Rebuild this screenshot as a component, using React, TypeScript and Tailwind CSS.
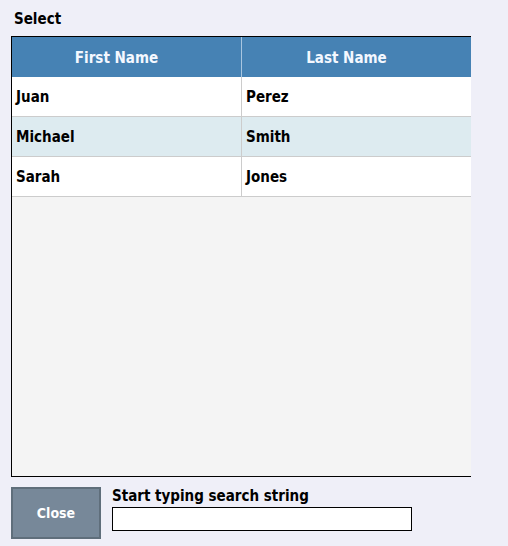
export default function App() {
  const rows = [
    ["Juan", "Perez"],
    ["Michael", "Smith"],
    ["Sarah", "Jones"],
  ];
  return (
    <div
      className="w-[508px] h-[546px] bg-[#efeff8] text-black overflow-hidden"
      style={{ fontFamily: '"DejaVu Sans Condensed", "DejaVu Sans", Verdana, sans-serif' }}
    >
      <div className="pl-[14px] pt-[10px] h-[36px] text-[15px] font-bold leading-[18px]">Select</div>
      <div className="ml-[11px] w-[460px] h-[441px] border-l border-t border-b border-black bg-[#f4f4f4] overflow-hidden">
        <div className="flex h-[40px] bg-[#4682b4] text-[#f4f8ff] text-[15px] font-bold">
          <div className="w-[230px] flex items-center justify-center pr-[20px] pt-[2px] border-r border-[#a9c6e0]">First Name</div>
          <div className="flex-1 flex items-center justify-center pr-[20px] pt-[2px]">Last Name</div>
        </div>
        {rows.map((r, i) => (
          <div
            key={i}
            className={`flex h-[40px] border-b border-[#cccccc] text-[15px] font-bold ${i === 1 ? "bg-[#ddebf0]" : "bg-white"}`}
          >
            <div className="w-[230px] flex items-center pl-[4px] pt-[2px] border-r border-[#cccccc]">{r[0]}</div>
            <div className="flex-1 flex items-center pl-[4px] pt-[2px]">{r[1]}</div>
          </div>
        ))}
      </div>
      <div className="flex mt-[10px] ml-[11px]">
        <button className="w-[90px] h-[52px] bg-[#778899] border-2 border-[#5f6e7b] text-white text-[14px] font-bold flex items-center justify-center">
          Close
        </button>
        <div className="ml-[11px] flex flex-col">
          <div className="text-[15px] font-bold leading-[18px]">Start typing search string</div>
          <div className="mt-[2px] w-[300px] h-[24px] bg-white border border-black"></div>
        </div>
      </div>
    </div>
  );
}
